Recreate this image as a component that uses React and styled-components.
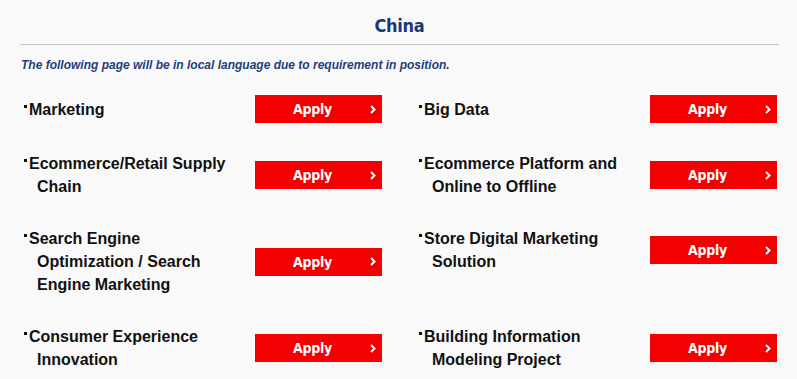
import React from "react";
import styled, { createGlobalStyle } from "styled-components";

const GlobalStyle = createGlobalStyle`
  html, body {
    margin: 0;
    padding: 0;
    background: #f9f9f9;
  }
  body {
    font-family: "Liberation Sans", Arial, sans-serif;
  }
`;

const condensed = `"DejaVu Sans Condensed", "Liberation Sans Narrow", "Arial Narrow", sans-serif`;

const Page = styled.div`
  width: 797px;
  box-sizing: border-box;
  padding: 0 18px 0 20px;
`;

const Header = styled.h2`
  margin: 0;
  padding: 14px 0 6px;
  text-align: center;
  font-family: ${condensed};
  font-weight: 700;
  font-size: 18px;
  line-height: 24px;
  letter-spacing: -0.3px;
  color: #1b3675;
  border-bottom: 1px solid #c6c6c6;
`;

const Notice = styled.p`
  margin: 13px 0 0 1px;
  font-size: 12px;
  line-height: 14px;
  font-style: italic;
  font-weight: 700;
  color: #1f3e7c;
`;

const Grid = styled.div`
  display: grid;
  grid-template-columns: repeat(2, 360px);
  column-gap: 35px;
  row-gap: 29px;
  align-items: start;
  margin-top: 23px;
  padding-left: 2px;
`;

const Item = styled.div`
  display: flex;
  align-items: center;
`;

const Label = styled.div`
  flex: 0 0 auto;
  box-sizing: border-box;
  width: 210px;
  margin-right: 23px;
  padding-left: 15px;
  text-indent: -15px;
  font-size: 16px;
  line-height: 23px;
  font-weight: 700;
  color: #111;

  &::before {
    content: "";
    display: inline-block;
    width: 3px;
    height: 3px;
    background: #111;
    vertical-align: top;
    margin: 7px 2px 0 2px;
  }
`;

const ApplyButton = styled.a`
  flex: 0 0 auto;
  box-sizing: border-box;
  width: 127px;
  height: 28px;
  display: flex;
  align-items: center;
  justify-content: space-between;
  padding: 0 6px 0 38px;
  background: #f50000;
  color: #fff;
  text-decoration: none;
  font-family: ${condensed};
  font-weight: 700;
  font-size: 14px;
  letter-spacing: -0.3px;
  cursor: pointer;
`;

const Chevron = () => (
  <svg width="6" height="9" viewBox="0 0 6 9" aria-hidden="true">
    <path d="M1 1 L4.5 4.5 L1 8" fill="none" stroke="#fff" strokeWidth="2" />
  </svg>
);

const positions = [
  "Marketing",
  "Big Data",
  "Ecommerce/Retail Supply Chain",
  "Ecommerce Platform and Online to Offline",
  "Search Engine Optimization / Search Engine Marketing",
  "Store Digital Marketing Solution",
  "Consumer Experience Innovation",
  "Building Information Modeling Project",
];

export default function App() {
  return (
    <>
      <GlobalStyle />
      <Page>
        <Header>China</Header>
        <Notice>
          The following page will be in local language due to requirement in position.
        </Notice>
        <Grid>
          {positions.map((p) => (
            <Item key={p}>
              <Label>{p}</Label>
              <ApplyButton>
                <span>Apply</span>
                <Chevron />
              </ApplyButton>
            </Item>
          ))}
        </Grid>
      </Page>
    </>
  );
}
